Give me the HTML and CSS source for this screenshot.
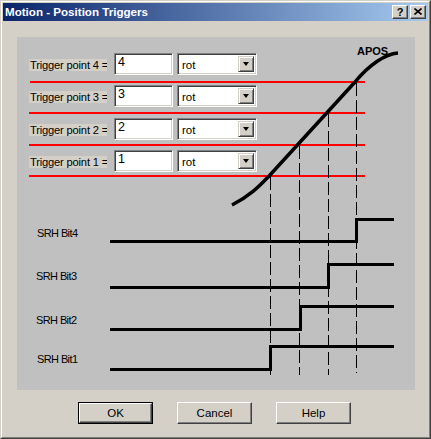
FILE: index.html
```html
<!DOCTYPE html>
<html>
<head>
<meta charset="utf-8">
<title>Motion - Position Triggers</title>
<link rel="stylesheet" href="styles.css">
</head>
<body>
<div class="window">
  <div class="frame">
    <div class="titlebar">
      <span class="title">Motion - Position Triggers</span>
      <div class="tb-btns">
        <div class="tb-btn help">?</div>
        <div class="tb-btn close">
          <svg width="8" height="7" viewBox="0 0 8 7"><path d="M0.5 0.5 L7.5 6.5 M7.5 0.5 L0.5 6.5" stroke="#000" stroke-width="1.6" fill="none"/></svg>
        </div>
      </div>
    </div>

    <div class="panel">
      <svg class="diagram" width="398" height="353" viewBox="0 0 398 353">
        <g stroke="#ff0000" stroke-width="2">
          <line x1="13" y1="45" x2="348" y2="45"/>
          <line x1="12" y1="76" x2="348" y2="76"/>
          <line x1="12" y1="108" x2="348" y2="108"/>
          <line x1="12" y1="139" x2="348" y2="139"/>
        </g>
        <g stroke="#000" stroke-width="1" stroke-dasharray="13 4">
          <line x1="253.5" y1="140" x2="253.5" y2="338"/>
          <line x1="282.5" y1="109" x2="282.5" y2="338"/>
          <line x1="311.5" y1="77" x2="311.5" y2="338"/>
          <line x1="339.5" y1="46" x2="339.5" y2="336"/>
        </g>
        <path d="M215,168 C235,158 245,146 253,138 L338,45 C352,28 368,17 381,16" stroke="#000" stroke-width="3.5" fill="none"/>
        <text class="apos" x="340" y="18">APOS</text>
        <g stroke="#000" stroke-width="3" fill="none" stroke-linejoin="miter">
          <polyline points="93,204.5 339.5,204.5 339.5,182.5 377,182.5"/>
          <polyline points="93,250.5 311.5,250.5 311.5,227.5 377,227.5"/>
          <polyline points="93,292.5 283.5,292.5 283.5,269.5 377,269.5"/>
          <polyline points="93,332.5 253.5,332.5 253.5,309.5 377,309.5"/>
        </g>
        <g class="bitlabel">
          <text x="20" y="200">SRH Bit4</text>
          <text x="19" y="243">SRH Bit3</text>
          <text x="19" y="287">SRH Bit2</text>
          <text x="20" y="326">SRH Bit1</text>
        </g>
      </svg>

      <div class="rows">
        <div class="row">
          <div class="label">Trigger point 4 =</div>
          <div class="field edit">4</div>
          <div class="field combo"><span class="combo-text">rot</span><div class="drop"><span class="arrow"></span></div></div>
        </div>
        <div class="row">
          <div class="label">Trigger point 3 =</div>
          <div class="field edit">3</div>
          <div class="field combo"><span class="combo-text">rot</span><div class="drop"><span class="arrow"></span></div></div>
        </div>
        <div class="row">
          <div class="label">Trigger point 2 =</div>
          <div class="field edit">2</div>
          <div class="field combo"><span class="combo-text">rot</span><div class="drop"><span class="arrow"></span></div></div>
        </div>
        <div class="row">
          <div class="label">Trigger point 1 =</div>
          <div class="field edit">1</div>
          <div class="field combo"><span class="combo-text">rot</span><div class="drop"><span class="arrow"></span></div></div>
        </div>
      </div>
    </div>

    <div class="buttons">
      <div class="btn default"><div class="btn-inner">OK</div></div>
      <div class="btn"><div class="btn-inner">Cancel</div></div>
      <div class="btn"><div class="btn-inner">Help</div></div>
    </div>
  </div>
</div>
</body>
</html>
```

FILE: styles.css
```css
* { box-sizing: border-box; }

html, body {
  margin: 0;
  padding: 0;
  background: #d4d0c8;
}

body {
  font-family: "Liberation Sans", Arial, sans-serif;
  font-size: 11px;
  color: #000;
}

.window {
  width: 431px;
  height: 439px;
  border: 1px solid;
  border-color: #d4d0c8 #404040 #404040 #d4d0c8;
  background: #d4d0c8;
}

.frame {
  width: 100%;
  height: 100%;
  border: 1px solid;
  border-color: #ffffff #808080 #808080 #ffffff;
  padding: 1px;
}

.titlebar {
  height: 18px;
  display: flex;
  align-items: center;
  justify-content: space-between;
  padding: 0 2px 0 2px;
  background: linear-gradient(to right, #0a246a, #a6caf0);
}

.title {
  color: #fff;
  font-weight: bold;
  font-size: 11.6px;
  line-height: 18px;
  white-space: nowrap;
}

.tb-btns {
  display: flex;
  gap: 2px;
}

.tb-btn {
  width: 16px;
  height: 14px;
  background: #d4d0c8;
  border: 1px solid;
  border-color: #ffffff #404040 #404040 #ffffff;
  box-shadow: inset -1px -1px #808080;
  display: flex;
  align-items: center;
  justify-content: center;
  font-weight: bold;
  font-size: 11px;
  line-height: 12px;
  padding-bottom: 1px;
}

.tb-btn svg { display: block; }

.panel {
  position: relative;
  margin: 16px 0 0 14px;
  width: 398px;
  height: 353px;
  background: #c0c0c0;
}

.diagram {
  position: absolute;
  left: 0;
  top: 0;
  display: block;
}

.apos {
  font-family: "Liberation Sans", Arial, sans-serif;
  font-weight: bold;
  font-size: 11px;
  fill: #000;
}

.bitlabel text {
  font-family: "Liberation Sans", Arial, sans-serif;
  font-size: 11px;
  letter-spacing: -0.6px;
  fill: #000;
}

.rows {
  position: relative;
  padding: 16px 0 0 12px;
  display: flex;
  flex-direction: column;
  gap: 10.33px;
}

.row {
  display: flex;
  align-items: flex-start;
  height: 22px;
}

.label {
  margin-top: 6px;
  width: 78px;
  height: 12px;
  line-height: 12px;
  padding-left: 1px;
  background: #d4d0c8;
  letter-spacing: -0.2px;
  font-size: 11.2px;
  white-space: nowrap;
  overflow: hidden;
}

.field {
  height: 22px;
  background: #fff;
  border: 1px solid;
  border-color: #808080 #ffffff #ffffff #808080;
  box-shadow: inset 1px 1px #404040, inset -1px -1px #d4d0c8;
}

.edit {
  margin-left: 7px;
  width: 59px;
  padding: 1px 0 0 3px;
  font-size: 12.5px;
  line-height: 14px;
}

.combo {
  margin-left: 4px;
  width: 80px;
  display: flex;
  align-items: stretch;
  padding: 2px;
}

.combo-text {
  flex: 1;
  padding-left: 2px;
  line-height: 18px;
  font-size: 11.5px;
}

.drop {
  width: 16px;
  background: #d4d0c8;
  border: 1px solid;
  border-color: #d4d0c8 #404040 #404040 #d4d0c8;
  box-shadow: inset 1px 1px #ffffff, inset -1px -1px #808080;
  display: flex;
  align-items: center;
  justify-content: center;
}

.arrow {
  width: 0;
  height: 0;
  border-left: 3.5px solid transparent;
  border-right: 3.5px solid transparent;
  border-top: 4px solid #000;
}

.buttons {
  margin-top: 12px;
  padding-left: 75px;
  display: flex;
  gap: 24px;
}

.btn {
  width: 75px;
  height: 22px;
  background: #d4d0c8;
  border: 1px solid;
  border-color: #ffffff #404040 #404040 #ffffff;
  box-shadow: inset -1px -1px #808080;
}

.btn.default {
  border: 1px solid #000;
  box-shadow: none;
}

.btn-inner {
  height: 100%;
  display: flex;
  align-items: center;
  justify-content: center;
  font-size: 11.5px;
  padding-bottom: 1px;
}

.btn.default .btn-inner {
  border: 1px solid;
  border-color: #ffffff #404040 #404040 #ffffff;
  box-shadow: inset -1px -1px #808080;
}
```
